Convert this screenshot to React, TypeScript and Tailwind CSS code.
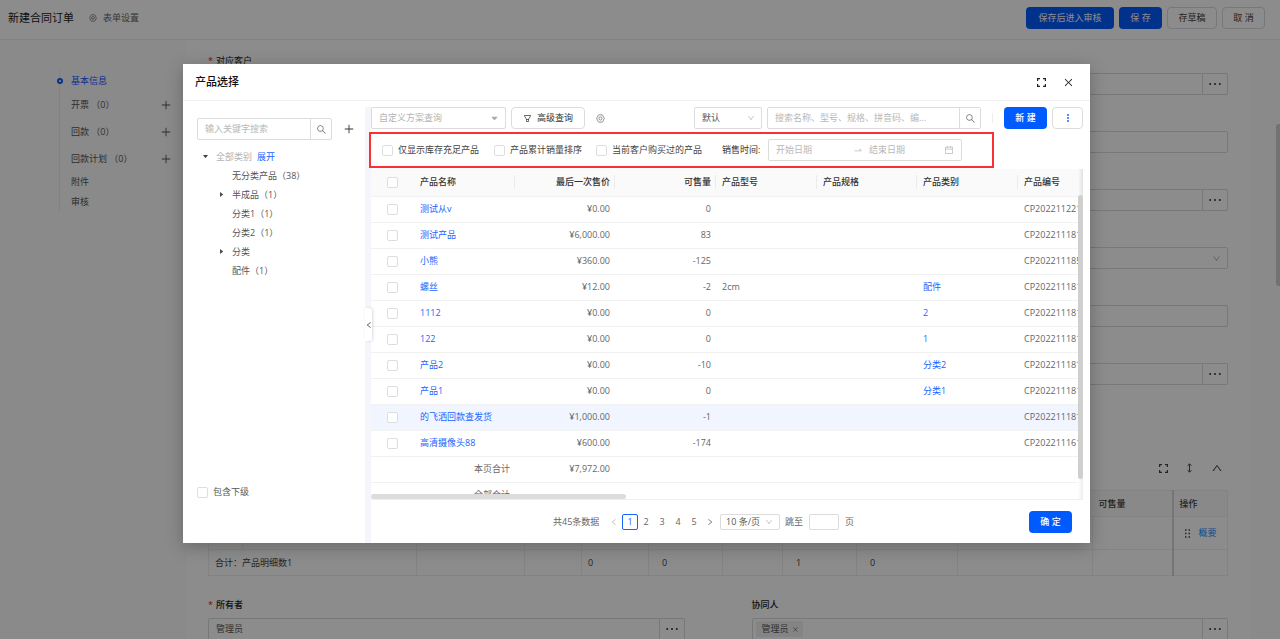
import React from "react";
import {
  AiOutlineSearch,
  AiOutlineFilter,
  AiOutlineClose,
  AiOutlineDown,
  AiOutlineUp,
  AiOutlineLeft,
  AiOutlineRight,
  AiOutlineCalendar,
  AiOutlineSwapRight,
  AiFillCaretDown,
  AiFillCaretRight,
  AiOutlinePlus,
} from "react-icons/ai";

function GearIcon({ className }: { className?: string }) {
  return (
    <svg viewBox="0 0 16 16" className={className} fill="none" stroke="currentColor" strokeWidth="1.4">
      <path d="M5.2 1.5h5.6c.5 0 .8.3 1 .6l2.6 4.9c.3.6.3 1.4 0 2l-2.6 4.9c-.2.4-.6.6-1 .6H5.2c-.4 0-.8-.2-1-.6L1.600 9c-.3-.6-.3-1.400 0-2l2.600-4.900c.2-.3.5-.6 1-.6z" />
      <circle cx="8" cy="8" r="2.800" />
    </svg>
  );
}

function FullscreenIcon({ className }: { className?: string }) {
  return (
    <svg viewBox="0 0 18 18" className={className} fill="none" stroke="currentColor" strokeWidth="2.4">
      <path d="M1.200 6V1.200H6M12 1.200h4.800V6M16.800 12v4.800H12M6 16.800H1.200V12" />
    </svg>
  );
}

function HeightIcon({ className }: { className?: string }) {
  return (
    <svg viewBox="0 0 10 18" className={className} fill="none" stroke="currentColor" strokeWidth="1.8">
      <path d="M5 2v14M1.500 5L5 1.500 8.500 5M1.500 13L5 16.500 8.500 13" />
    </svg>
  );
}

function DragIcon({ className }: { className?: string }) {
  return (
    <svg viewBox="0 0 10 18" className={className} fill="currentColor">
      {[2, 9, 16].map((y) => (
        <React.Fragment key={y}>
          <rect x="0" y={y - 1.5} width="3" height="3" />
          <rect x="7" y={y - 1.5} width="3" height="3" />
        </React.Fragment>
      ))}
    </svg>
  );
}

function EllipsisIcon({ className }: { className?: string }) {
  return (
    <svg viewBox="0 0 12 4" className={className} fill="currentColor">
      <circle cx="1.200" cy="2" r="1" />
      <circle cx="6" cy="2" r="1" />
      <circle cx="10.800" cy="2" r="1" />
    </svg>
  );
}

function MoreIcon({ className }: { className?: string }) {
  return (
    <svg viewBox="0 0 2 8" className={className} fill="currentColor">
      <circle cx="1" cy="1" r=".9" />
      <circle cx="1" cy="4" r=".9" />
      <circle cx="1" cy="7" r=".9" />
    </svg>
  );
}

function CheckBox({ label }: { label?: string }) {
  return (
    <input
      type="checkbox"
      aria-label={label}
      className="block size-[11px] shrink-0 appearance-none rounded-[2px] border border-[#dedede] bg-white"
    />
  );
}

const navItems = [
  { label: "开票 （0）", cls: "h-[27px]", plus: true },
  { label: "回款 （0）", cls: "h-[27px]", plus: true },
  { label: "回款计划 （0）", cls: "h-[27px]", plus: true },
  { label: "附件", cls: "h-[19px]", plus: false },
  { label: "审核", cls: "h-[21px]", plus: false },
];

function SideNav() {
  return (
    <nav className="w-[187px] shrink-0 pt-[30px] pr-[15px] pl-[59px]">
      <ul className="border-l border-[#ececec] text-[#555]">
        <li className="flex h-[21px] items-center">
          <span className="-ml-[3px] size-[6px] rounded-full border-2 border-[#0f5cff] bg-white" />
          <a href="#basic" className="ml-2 text-[#0f5cff]">基本信息</a>
        </li>
        {navItems.map((n) => (
          <li key={n.label} className={`flex items-center justify-between pl-[11px] ${n.cls}`}>
            <a href="#section">{n.label}</a>
            {n.plus && (
              <button aria-label={`新增${n.label}`}>
                <AiOutlinePlus className="size-[12px]" />
              </button>
            )}
          </li>
        ))}
      </ul>
    </nav>
  );
}

function MoreField({ label, value }: { label: string; value?: string }) {
  return (
    <div className="flex h-[22px]">
      <input
        aria-label={label}
        defaultValue={value}
        className="min-w-0 flex-1 rounded-l-[2px] border border-[#dadada] bg-white px-[7px] text-[#555] outline-none"
      />
      <button
        aria-label={`选择${label}`}
        className="flex w-[25px] items-center justify-center rounded-r-[2px] border border-l-0 border-[#dadada] text-[#333]"
      >
        <EllipsisIcon className="h-1 w-3" />
      </button>
    </div>
  );
}

function PlainField({ label }: { label: string }) {
  return (
    <input aria-label={label} className="block h-[22px] w-full rounded-[2px] border border-[#dadada] bg-white outline-none" />
  );
}

const detailCols = [
  "w-[34px]",
  "w-[174px]",
  "w-[108px]",
  "w-[57px]",
  "w-[67px]",
  "w-[74px]",
  "w-[60px]",
  "w-[74px]",
  "w-[101px]",
  "w-[135px]",
  "w-[80px]",
  "w-[55px]",
];

function DetailTable() {
  return (
    <table className="w-full table-fixed border-collapse border border-[#eeeeee] text-left text-[#444]">
      <colgroup>
        {detailCols.map((c, i) => (
          <col key={i} className={c} />
        ))}
      </colgroup>
      <thead>
        <tr className="h-[26px] bg-[#f9f9f9]">
          {detailCols.slice(0, 10).map((_, i) => (
            <th key={i} />
          ))}
          <th className="border-r-2 border-[#d6d6d6] pl-[6px] font-medium">可售量</th>
          <th className="pl-[6px] font-medium">操作</th>
        </tr>
      </thead>
      <tbody>
        <tr className="h-[33px] border-y border-[#eeeeee]">
          {detailCols.slice(0, 10).map((_, i) => (
            <td key={i} className="border-r border-[#eeeeee]" />
          ))}
          <td className="border-r-2 border-[#d6d6d6]" />
          <td className="px-[11px]">
            <div className="flex items-center gap-[9px]">
              <DragIcon className="h-[9px] w-[5px] shrink-0" />
              <a href="#summary" className="shrink-0 text-[#1c8bff]">概要</a>
            </div>
          </td>
        </tr>
        <tr className="h-[26px]">
          <td colSpan={2} className="border-r border-[#eeeeee] pl-[6px]">合计：产品明细数1</td>
          <td className="border-r border-[#eeeeee]" />
          <td className="border-r border-[#eeeeee]" />
          <td className="border-r border-[#eeeeee] pl-[6px]">0</td>
          <td className="border-r border-[#eeeeee] pl-[13px]">0</td>
          <td className="border-r border-[#eeeeee]" />
          <td className="border-r border-[#eeeeee] pl-[13px]">1</td>
          <td className="border-r border-[#eeeeee] pl-[13px]">0</td>
          <td className="border-r border-[#eeeeee]" />
          <td className="border-r-2 border-[#d6d6d6]" />
          <td />
        </tr>
      </tbody>
    </table>
  );
}

function OrderPage() {
  return (
    <>
      <header className="flex shrink-0 items-center border-b border-[#eeeeee] bg-white pt-[7px] pr-[15px] pb-[10px] pl-2">
        <h1 className="text-[11px] leading-4 text-[#222]">新建合同订单</h1>
        <button className="ml-[15px] flex items-center gap-[6px] text-[#666]">
          <GearIcon className="size-[8px]" />
          表单设置
        </button>
        <div className="ml-auto flex gap-[5px]">
          <button className="h-[22px] w-[88px] rounded-[4px] bg-[#005bff] text-white">保存后进入审核</button>
          <button className="h-[22px] w-[43px] rounded-[4px] bg-[#005bff] text-white">保 存</button>
          <button className="h-[22px] w-[50px] rounded-[4px] border border-[#dadada] text-[#444]">存草稿</button>
          <button className="h-[22px] w-[43px] rounded-[4px] border border-[#dadada] text-[#444]">取 消</button>
        </div>
      </header>
      <div className="flex min-h-0 flex-1 overflow-hidden bg-[#fbfbfb]">
        <SideNav />
        <main className="mr-[31px] flex-1 bg-white pt-[13px] pr-[23px] pl-[21px]">
          <div className="grid grid-cols-2 gap-x-[67px]">
            <div>
              <div className="mb-1 flex h-4 items-center gap-[3px] text-[#222]">
                <span className="text-[#e02020]">*</span>对应客户
              </div>
              <MoreField label="对应客户" />
            </div>
            <div className="flex flex-col gap-9 pt-[20px]">
              <MoreField label="联系人" />
              <PlainField label="主题" />
              <MoreField label="机会" />
              <div className="relative">
                <select
                  aria-label="分类"
                  className="block h-[22px] w-full appearance-none rounded-[2px] border border-[#dadada] bg-white"
                />
                <AiOutlineDown className="absolute top-[7px] right-[7px] size-[9px] text-[#aaa]" />
              </div>
              <PlainField label="金额" />
              <MoreField label="部门" />
            </div>
          </div>
          <div className="mt-[77px] flex h-[12px] items-center justify-end gap-[17px] pr-[5px] text-[#444]">
            <FullscreenIcon className="size-[9px]" />
            <HeightIcon className="h-[10px] w-[9px]" />
            <AiOutlineUp className="size-[12px]" />
          </div>
          <div className="mt-[16px]">
            <DetailTable />
          </div>
          <div className="mt-[21px] grid grid-cols-2 gap-x-[67px]">
            <div>
              <div className="mb-[5px] flex h-4 items-center gap-[3px] font-medium text-[#222]">
                <span className="text-[#e02020]">*</span>所有者
              </div>
              <MoreField label="所有者" value="管理员" />
            </div>
            <div>
              <div className="mb-[5px] flex h-4 items-center font-medium text-[#222]">协同人</div>
              <div className="flex h-[22px] rounded-[2px] border border-[#dadada]">
                <div className="flex flex-1 items-center pl-[3px]">
                  <span className="flex h-4 items-center gap-[3px] bg-[#f1f1f1] pr-1 pl-[6px] text-[#555]">
                    管理员
                    <button aria-label="移除" className="text-[#777]">
                      <AiOutlineClose className="size-[7px]" />
                    </button>
                  </span>
                </div>
                <button
                  aria-label="选择协同人"
                  className="flex w-[25px] items-center justify-center border-l border-[#dadada] text-[#333]"
                >
                  <EllipsisIcon className="h-1 w-3" />
                </button>
              </div>
            </div>
          </div>
        </main>
      </div>
      <div className="absolute top-[124px] right-0 h-[162px] w-1 rounded-l-[3px] bg-[#cfcfcf]" />
    </>
  );
}

const tree = [
  { label: "无分类产品（38）", caret: false },
  { label: "半成品（1）", caret: true },
  { label: "分类1（1）", caret: false },
  { label: "分类2（1）", caret: false },
  { label: "分类", caret: true },
  { label: "配件（1）", caret: false },
];

function SearchBox({ placeholder, className }: { placeholder: string; className: string }) {
  return (
    <div className={`flex h-[22px] rounded-[2px] border border-[#dcdcdc] ${className}`}>
      <input
        aria-label="搜索"
        placeholder={placeholder}
        className="min-w-0 flex-1 px-[7px] outline-none placeholder:text-[#b8b8b8]"
      />
      <button
        aria-label="执行搜索"
        className="flex w-[21px] items-center justify-center border-l border-[#dcdcdc] text-[#777]"
      >
        <AiOutlineSearch className="size-[11px]" />
      </button>
    </div>
  );
}

function CategoryPanel() {
  return (
    <aside className="flex w-[182px] shrink-0 flex-col pt-[11px] pl-[14px]">
      <div className="flex items-center">
        <SearchBox placeholder="输入关键字搜索" className="w-[135px]" />
        <button aria-label="新增类别" className="ml-[11px] text-[#333]">
          <AiOutlinePlus className="size-[12px]" />
        </button>
      </div>
      <ul className="mt-[7px] text-[#555]">
        <li className="flex h-[19px] items-center">
          <AiFillCaretDown className="mx-[5px] size-[7px] text-[#444]" />
          <span className="ml-[2px] text-[#b3b3b3]">全部类别</span>
          <a href="#expand" className="ml-[5px] text-[#1764ff]">展开</a>
        </li>
        {tree.map((t) => (
          <li key={t.label} className="flex h-[19px] items-center pl-[21px]">
            <span className="w-[14px]">{t.caret && <AiFillCaretRight className="size-[7px] text-[#444]" />}</span>
            {t.label}
          </li>
        ))}
      </ul>
      <label className="mt-auto mb-[43px] flex h-4 items-center gap-[5px] text-[#555]">
        <CheckBox />
        包含下级
      </label>
    </aside>
  );
}

const rows = [
  { name: "测试从v", price: "¥0.00", qty: "0", model: "", cat: "", code: "CP202211221" },
  { name: "测试产品", price: "¥6,000.00", qty: "83", model: "", cat: "", code: "CP202211181" },
  { name: "小熊", price: "¥360.00", qty: "-125", model: "", cat: "", code: "CP202211185" },
  { name: "螺丝", price: "¥12.00", qty: "-2", model: "2cm", cat: "配件", code: "CP202211181" },
  { name: "1112", price: "¥0.00", qty: "0", model: "", cat: "2", code: "CP202211181" },
  { name: "122", price: "¥0.00", qty: "0", model: "", cat: "1", code: "CP202211181" },
  { name: "产品2", price: "¥0.00", qty: "-10", model: "", cat: "分类2", code: "CP202211181" },
  { name: "产品1", price: "¥0.00", qty: "0", model: "", cat: "分类1", code: "CP202211181" },
  { name: "的飞洒回款查发货", price: "¥1,000.00", qty: "-1", model: "", cat: "", code: "CP202211181" },
  { name: "高清摄像头88", price: "¥600.00", qty: "-174", model: "", cat: "", code: "CP202211161" },
];

const headers = [
  { label: "产品名称", right: false, width: "w-[101px]" },
  { label: "最后一次售价", right: true, width: "w-[100px]" },
  { label: "可售量", right: true, width: "w-[101px]" },
  { label: "产品型号", right: false, width: "w-[101px]" },
  { label: "产品规格", right: false, width: "w-[100px]" },
  { label: "产品类别", right: false, width: "w-[101px]" },
  { label: "产品编号", right: false, width: "w-[103px]" },
];

function ProductTable() {
  return (
    <div className="relative mt-px h-[331px] overflow-hidden border-b border-[#efefef]">
      <table className="w-full min-w-[750px] table-fixed border-collapse text-left text-[#666]">
        <colgroup>
          <col className="w-[43px]" />
          {headers.map((h) => (
            <col key={h.label} className={h.width} />
          ))}
        </colgroup>
        <thead>
          <tr className="h-[27px] border-b border-[#f2f2f2] bg-[#fafafa] text-[#333]">
            <th className="pl-4">
              <CheckBox label="全选" />
            </th>
            {headers.map((h) => (
              <th key={h.label} className="p-0 font-medium">
                <div className={`h-[14px] border-r border-[#ececec] pr-1 pl-[6px] leading-[14px] whitespace-nowrap ${h.right ? "text-right" : ""}`}>
                  {h.label}
                </div>
              </th>
            ))}
          </tr>
        </thead>
        <tbody>
          {rows.map((r, i) => (
            <tr key={r.name} className={`h-[26px] border-b border-[#f2f2f2] ${i === 8 ? "bg-[#f0f5ff]" : ""}`}>
              <td className="pl-4">
                <CheckBox label={r.name} />
              </td>
              <td className="pl-[6px] whitespace-nowrap">
                <a href="#product" className="text-[#1764ff]">{r.name}</a>
              </td>
              <td className="pr-[5px] text-right">{r.price}</td>
              <td className="pr-[5px] text-right">{r.qty}</td>
              <td className="pl-[6px]">{r.model}</td>
              <td />
              <td className="pl-[6px]">
                <a href="#category" className="text-[#1764ff]">{r.cat}</a>
              </td>
              <td className="pl-[6px]">{r.code}</td>
            </tr>
          ))}
          <tr className="h-[26px] border-b border-[#f2f2f2]">
            <td />
            <td className="pr-[5px] text-right">本页合计</td>
            <td className="pr-[5px] text-right">¥7,972.00</td>
            <td colSpan={5} />
          </tr>
          <tr className="h-[26px]">
            <td />
            <td className="pr-[5px] text-right">全部合计</td>
            <td colSpan={6} />
          </tr>
        </tbody>
      </table>
      <div className="absolute top-0 right-0 h-full w-[5px] bg-linear-to-r from-transparent to-black/10" />
      <div className="absolute top-[26px] right-0 bottom-0 w-[5px] bg-linear-to-r from-white to-[#eee]">
        <div className="h-[284px] w-full rounded-[3px] bg-[#cfcfcf]" />
      </div>
      <div className="absolute right-[5px] bottom-0 left-0 h-[5px] bg-white">
        <div className="h-full w-[255px] rounded-[3px] bg-[#dcdcdc]" />
      </div>
    </div>
  );
}

function Toolbar() {
  return (
    <div className="flex items-center">
      <div className="relative w-[135px]">
        <select
          aria-label="自定义方案查询"
          className="block h-[22px] w-full appearance-none rounded-[2px] border border-[#dcdcdc] px-[7px] text-[#b3b3b3]"
        >
          <option>自定义方案查询</option>
        </select>
        <AiFillCaretDown className="absolute top-[7px] right-[7px] size-[9px] text-[#aaa]" />
      </div>
      <button className="ml-[5px] flex h-[22px] w-[74px] items-center justify-center gap-[5px] rounded-[4px] border border-[#dcdcdc] text-[#333]">
        <AiOutlineFilter className="size-[9px]" />
        高级查询
      </button>
      <button aria-label="设置" className="ml-[11px] text-[#777]">
        <GearIcon className="size-[9px]" />
      </button>
      <div className="relative ml-auto w-[68px]">
        <select
          aria-label="排序"
          className="block h-[22px] w-full appearance-none rounded-[2px] border border-[#dcdcdc] px-[7px] text-[#555]"
        >
          <option>默认</option>
        </select>
        <AiOutlineDown className="absolute top-[7px] right-[7px] size-[8px] text-[#bbb]" />
      </div>
      <SearchBox placeholder="搜索名称、型号、规格、拼音码、编..." className="ml-[5px] w-[214px]" />
      <span className="mx-[11px] h-[10px] w-px bg-[#eee]" />
      <button className="h-[22px] w-[43px] rounded-[4px] bg-[#005bff] font-medium text-white">新 建</button>
      <button
        aria-label="更多"
        className="ml-[5px] flex h-[22px] w-[31px] items-center justify-center rounded-[4px] border border-[#dcdcdc] text-[#005bff]"
      >
        <MoreIcon className="h-2 w-[2px]" />
      </button>
    </div>
  );
}

function FilterRow() {
  return (
    <div className="relative z-10 mt-[3px] -ml-[2px] flex h-[36px] w-[625px] items-center border-2 border-[#fb3030] pl-[11px] text-[#444]">
      <label className="flex w-28 items-center gap-[5px]">
        <CheckBox />
        仅显示库存充足产品
      </label>
      <label className="flex w-[102px] items-center gap-[5px]">
        <CheckBox />
        产品累计销量排序
      </label>
      <label className="flex w-[126px] items-center gap-[5px]">
        <CheckBox />
        当前客户购买过的产品
      </label>
      <span className="w-[46px] text-[#333]">销售时间:</span>
      <div className="flex h-[22px] w-[194px] items-center rounded-[2px] border border-[#dcdcdc] px-[7px] text-[#bbb]">
        <input aria-label="开始日期" placeholder="开始日期" className="w-[77px] outline-none placeholder:text-[#b8b8b8]" />
        <AiOutlineSwapRight className="size-[10px] shrink-0" />
        <input
          aria-label="结束日期"
          placeholder="结束日期"
          className="ml-[6px] min-w-0 flex-1 outline-none placeholder:text-[#b8b8b8]"
        />
        <AiOutlineCalendar className="size-[10px] shrink-0" />
      </div>
    </div>
  );
}

function Footer() {
  return (
    <footer className="flex items-center pt-[11px] pr-[11px] pb-[10px] pl-[182px] text-[#666]">
      <span className="w-[57px] whitespace-nowrap">共45条数据</span>
      <button aria-label="上一页" className="text-[#bbb]">
        <AiOutlineLeft className="size-[8px]" />
      </button>
      <button className="ml-[4px] size-4 rounded-[2px] border border-[#1764ff] leading-[12px] font-medium text-[#1764ff]">1</button>
      {["2", "3", "4", "5"].map((n) => (
        <button key={n} className="size-4">
          {n}
        </button>
      ))}
      <button aria-label="下一页" className="ml-[4px]">
        <AiOutlineRight className="size-[8px]" />
      </button>
      <div className="relative ml-[6px] w-[60px]">
        <select
          aria-label="每页条数"
          className="block h-4 w-full appearance-none rounded-[2px] border border-[#dcdcdc] px-[5px] text-[#555]"
        >
          <option>10 条/页</option>
        </select>
        <AiOutlineDown className="absolute top-[4px] right-[7px] size-[8px] text-[#bbb]" />
      </div>
      <label className="ml-[5px] flex items-center gap-[6px]">
        跳至
        <input className="h-4 w-[30px] rounded-[2px] border border-[#dcdcdc] outline-none" />
        页
      </label>
      <button className="ml-auto h-[22px] w-[43px] rounded-[4px] bg-[#005bff] font-medium text-white">确 定</button>
    </footer>
  );
}

function ProductModal() {
  return (
    <div className="absolute inset-0 bg-black/45 pt-16 pr-[190px] pl-[183px]">
      <section role="dialog" aria-label="产品选择" className="bg-white shadow-[0_4px_16px_rgba(0,0,0,0.25)]">
        <header className="flex h-[37px] items-center border-b border-[#f0f0f0] pr-[16px] pl-[12px] text-[#222]">
          <h2 className="text-[11px] font-medium text-[#111]">产品选择</h2>
          <button aria-label="全屏" className="ml-auto">
            <FullscreenIcon className="size-[9px]" />
          </button>
          <button aria-label="关闭" className="ml-[17px]">
            <AiOutlineClose className="size-[11px]" />
          </button>
        </header>
        <div className="flex pt-[6px]">
          <CategoryPanel />
          <div className="relative w-[6px] shrink-0 bg-[#f4f6fc]">
            <button
              aria-label="收起"
              className="absolute top-[201px] left-0 z-10 flex h-[33px] w-[7px] items-center justify-center rounded-r-[3px] bg-white text-[#444] shadow-[1px_0_3px_rgba(0,0,0,0.15)]"
            >
              <AiOutlineLeft className="size-[8px] shrink-0" />
            </button>
          </div>
          <div className="min-w-0 flex-1 pr-[7px]">
            <Toolbar />
            <FilterRow />
            <ProductTable />
            <Footer />
          </div>
        </div>
      </section>
    </div>
  );
}

export default function App() {
  return (
    <div className="relative flex h-screen flex-col overflow-hidden bg-white font-['Open_Sans','Noto_Sans_CJK_SC',sans-serif] text-[9px] leading-[14px]">
      <OrderPage />
      <ProductModal />
    </div>
  );
}
